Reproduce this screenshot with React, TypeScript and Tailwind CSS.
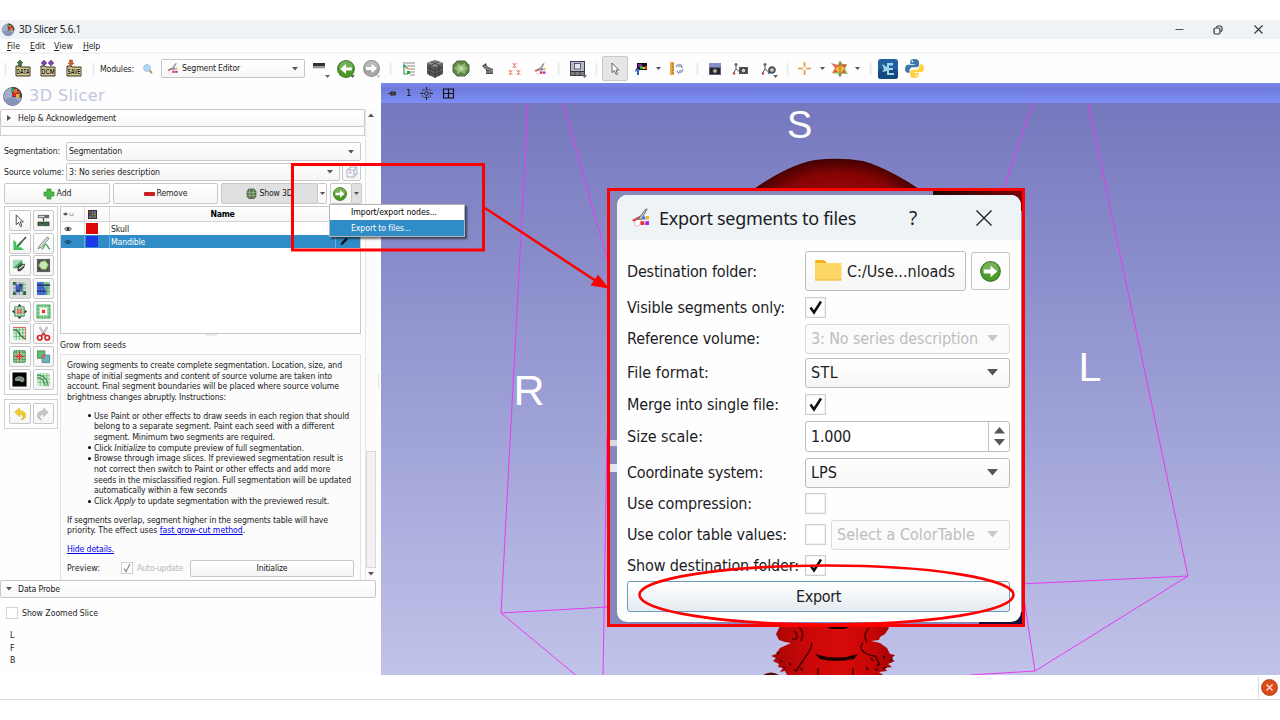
import React, { useLayoutEffect, useRef, useState } from 'react';

type Kids = { children?: React.ReactNode };

/* Text run whose tracking is adjusted so that it spans a given width. */
function T({ w, c = '', children }: Kids & { w: number; c?: string }) {
  const ref = useRef<HTMLSpanElement>(null);
  const [ls, setLs] = useState(0);
  useLayoutEffect(() => {
    const el = ref.current;
    if (!el) return;
    const n = (el.textContent || '').length;
    setLs((w - el.getBoundingClientRect().width) / n);
  }, [w]);
  return (
    <span ref={ref} className={'inline-block whitespace-pre ' + c} style={{ letterSpacing: ls + 'px' }}>
      {children}
    </span>
  );
}

function Svg({ w, h = w, vb, c = '', children }: Kids & { w: number; h?: number; vb?: string; c?: string }) {
  return (
    <svg width={w} height={h} viewBox={vb || `0 0 ${w} ${h}`} className={'block shrink-0 overflow-visible ' + c} fill="none">
      {children}
    </svg>
  );
}

const Caret = ({ w = 6, color = '#555' }: { w?: number; color?: string }) => (
  <Svg w={w} h={w * 0.6} vb="0 0 10 6">
    <path d="M0 0h10L5 6z" fill={color} />
  </Svg>
);

const Logo = ({ s }: { s: number }) => (
  <Svg w={s} vb="0 0 20 20">
    <circle cx="9.5" cy="10.5" r="9" fill="#a3b0cf" stroke="#6c7796" />
    <path d="M1.500 13a8.500 8.500 0 0 0 15.500 2L10 11z" fill="#8795b8" />
    <path d="M9 1a9 9 0 0 1 9.800 10.500L9 11z" fill="#3a4053" />
    <path d="M8 3l3-1v4H8z" fill="#3aa257" />
    <path d="M11 3h3.500v4H11z" fill="#e8682a" />
    <path d="M9 7h4v3.500H9z" fill="#d32b25" />
    <path d="M13 8h3.500v3.500H13z" fill="#f0b02e" />
    <path d="M14.500 5h2.500v3h-2.500z" fill="#c33" />
  </Svg>
);

const FileBox = ({ label, kind }: { label: string; kind: 'data' | 'dcm' | 'save' }) => (
  <Svg w={16} h={17}>
    <path d="M1 6h4l1 1h9v9H1z" fill="#c9b981" stroke="#3e3825" strokeWidth="1" />
    {kind === 'data' && <path d="M5 0l3 3H6.500v3h-3V3H2z" fill="#2d7a3f" stroke="#222" strokeWidth=".4" />}
    {kind === 'dcm' && <path d="M4 0l3 3-3 3-3-3zM11 0l3 3-3 3-3-3z" fill="#8b3fb0" stroke="#333" strokeWidth=".4" />}
    {kind === 'save' && <path d="M5 6L2 3h1.500V0h3v3H8z" fill="#e35a1d" stroke="#633" strokeWidth=".4" />}
    <text x="8" y="14.300" textAnchor="middle" fontSize="6.500" fontWeight="700" textLength="13.500" lengthAdjust="spacingAndGlyphs" fill="#111" stroke="#fff5cf" strokeWidth=".6" paintOrder="stroke" fontFamily="Liberation Sans, sans-serif">
      {label}
    </text>
  </Svg>
);

const Mag = () => (
  <Svg w={10}>
    <path d="M5.500 5.500l3.500 3.500" stroke="#c08a4a" strokeWidth="1.800" />
    <circle cx="4" cy="4" r="3.400" fill="#b5d6f4" stroke="#9dc0e6" strokeWidth=".9" />
  </Svg>
);

const SegIcon = ({ s }: { s: number }) => (
  <Svg w={s} vb="0 0 20 20">
    <path d="M3 13l7-3 1 3-2 5-4 1.500z" fill="#fff" stroke="#efb4bb" strokeWidth="1" />
    <path d="M1 12.500L10 8l1 2-8 4.500z" fill="#cf4a4a" />
    <path d="M7.500 12L15 1.500l2-.5L11 12z" fill="#c4c8cc" stroke="#5b6066" strokeWidth=".9" />
    <path d="M12 9h3v3h-3z" fill="#3a6de0" />
    <path d="M15.500 8.500h3.500v3.500h-3.500z" fill="#f1b52d" />
    <path d="M10 14h4v4h-4z" fill="#e0362f" />
    <path d="M15 14h4v4h-4z" fill="#a32ad6" />
  </Svg>
);

const RoundArrow = ({ s, dir, grey }: { s: number; dir: 'l' | 'r'; grey?: boolean }) => (
  <Svg w={s} vb="0 0 20 20">
    <circle cx="10" cy="10" r="9.300" fill={grey ? '#a6a6a6' : '#4c9a2a'} stroke={grey ? '#8e8e8e' : '#3c7d26'} strokeWidth="1.200" />
    <path d="M2 9a8 8 0 0 1 16 0c-5 2-11 2-16 0z" fill="#fff" opacity=".22" />
    <path
      transform={dir === 'l' ? 'matrix(-1 0 0 1 20 0)' : undefined}
      d="M3.500 8.200h6.500V4.500l6.500 5.500-6.500 5.500v-3.700H3.500z"
      fill="#fff"
    />
  </Svg>
);

const Cell = ({ w, corner, cc = '#666', children }: Kids & { w: string; corner?: boolean; cc?: string }) => (
  <div className={'relative flex h-full shrink-0 items-center justify-center ' + w}>
    {children}
    {corner && (
      <div className="absolute right-[3px] bottom-[5px]">
        <Caret w={5} color={cc} />
      </div>
    )}
  </div>
);

const Sep = ({ w }: { w: string }) => (
  <Cell w={w}>
    <div className="h-[12px] w-[3px] bg-[#f1f1f1]" />
  </Cell>
);

const Axes = () => (
  <>
    <path d="M4 2v5l-3 5M4 7l5 4" stroke="#555" strokeWidth="1" />
    <circle cx="2" cy="11.500" r="1.200" fill="#c44" />
    <circle cx="4" cy="2.500" r="1.500" fill="#666" />
    <circle cx="8" cy="11" r="1.200" fill="#48b" />
  </>
);

function Toolbar() {
  return (
    <div className="flex h-[29px] items-center bg-[#fefefe]">
      <Sep w="w-[10px]" />
      <Cell w="w-[25px]"><FileBox label="DATA" kind="data" /></Cell>
      <Cell w="w-[26px]"><FileBox label="DCM" kind="dcm" /></Cell>
      <Cell w="w-[26px]"><FileBox label="SAVE" kind="save" /></Cell>
      <Sep w="w-[13px]" />
      <div className="w-[43px] pt-px"><T w={34}>Modules:</T></div>
      <Mag />
      <div className="ml-[8px] flex h-[19px] w-[144px] items-center rounded-[2px] border border-[#c6c6c6] bg-gradient-to-b from-white to-[#f7f7f7] pr-[6px] pl-[5px]">
        <SegIcon s={11} />
        <div className="ml-[4px] flex-1"><T w={58}>Segment Editor</T></div>
        <Caret />
      </div>
      <Cell w="w-[28px]" corner>
        <Svg w={12} h={8} c="mb-[5px]">
          <path d="M0 1h12v3H0z" fill="#333" />
          <path d="M0 4h12v2H0z" fill="#999" />
          <path d="M0 6h12v1H0z" fill="#ddd" />
        </Svg>
      </Cell>
      <Cell w="w-[25px]" corner><RoundArrow s={18} dir="l" /></Cell>
      <Cell w="w-[26px]" corner cc="#ccc"><RoundArrow s={17} dir="r" grey /></Cell>
      <Sep w="w-[12px]" />
      <Cell w="w-[26px]">
        <Svg w={14}>
          <path d="M1 1h12M5 4h8M5 7h8M8 10h5M8 13h5" stroke="#888" strokeWidth="1" />
          <path d="M2 2v10h4M2 5h3" stroke="#3a9a4a" strokeWidth="1.200" />
          <path d="M1 3h3v2H1z" fill="#3aa" />
          <path d="M5 9h3v3H5z" fill="#27a83c" />
          <path d="M4 5h2v2H4z" fill="#e5a02a" />
        </Svg>
      </Cell>
      <Cell w="w-[25px]">
        <Svg w={18}>
          <path d="M9 0l8 3v11l-8 4-8-4V3z" fill="#5c5c5c" />
          <path d="M9 0l8 3-8 4-8-4z" fill="#8b8b8b" />
          <path d="M9 7v11M4 5v11M13 5v11M1 7l8 4 8-4M1 11l8 4 8-4M5 1.500l8 3.700M13 1.500L5 5.200" stroke="#2c2c2c" strokeWidth=".7" />
        </Svg>
      </Cell>
      <Cell w="w-[27px]">
        <Svg w={18} h={17}>
          <path d="M5 1h8l4 4v7l-4 4H5l-4-4V5z" fill="#5f8746" stroke="#4a6b3a" />
          <path d="M5 3l4 2 4-2v3l3 2-3 3v3l-4-2-4 2v-3L2 8l3-2z" fill="#9cc080" opacity=".85" />
          <circle cx="9" cy="8.500" r="2.500" fill="#b9d6a0" />
        </Svg>
      </Cell>
      <Cell w="w-[27px]">
        <Svg w={13} h={13}>
          <path d="M1 4l4-3 1 3 6 3v5H5V8z" fill="#4a4a4a" />
          <path d="M3 6l9 3M3 4l9 3M5 10h7" stroke="#bbb" strokeWidth=".8" />
        </Svg>
      </Cell>
      <Cell w="w-[26px]">
        <Svg w={13} h={12}>
          <path d="M4.500 0l4 5M8.500 0l-4 5M6.500 0v5M.500 7l4 5M4.500 7l-4 5M2.500 7v5M8.500 7l4 5M12.500 7l-4 5M10.500 7v5" stroke="#ef8f7c" strokeWidth="1" />
        </Svg>
      </Cell>
      <Cell w="w-[25px]"><SegIcon s={12} /></Cell>
      <Sep w="w-[13px]" />
      <Cell w="w-[25px]" corner>
        <Svg w={15}>
          <rect x=".5" y=".5" width="14" height="14" fill="#b7b9d3" stroke="#3c3c48" />
          <path d="M.5 10.500h14M5 10v5M10 10v5" stroke="#333" />
          <rect x="4.500" y="2.500" width="6" height="5.500" fill="#e4e5f2" stroke="#444" strokeWidth=".8" />
          <path d="M1 11h13v3H1z" fill="#555" opacity=".6" />
        </Svg>
      </Cell>
      <Sep w="w-[12px]" />
      <div className="flex h-[25px] w-[26px] items-center justify-center rounded-[2px] border border-[#c9c9c9] bg-[#e6e6e6]">
        <Svg w={8} h={12}><path d="M1 0v9.500l2.300-2L5 11.500l1.500-.6L5 7h2.800z" fill="#fff" stroke="#444" strokeWidth=".8" /></Svg>
      </div>
      <Cell w="w-[26px]">
        <Svg w={13} h={12}>
          <path d="M2 0h10v7H2z" fill="#111" />
          <path d="M3 1h4v3H3z" fill="#8a1fa0" />
          <path d="M5 3h3v3H5z" fill="#2bb34a" />
          <path d="M8 4h2v2H8z" fill="#e0d22b" />
          <path d="M10 3h2v3h-2z" fill="#e03030" />
          <path d="M1 5l3 1v6H2V8L0 9z" fill="#2f63c4" />
        </Svg>
      </Cell>
      <Cell w="w-[9px]"><Caret w={5} /></Cell>
      <Cell w="w-[27px]">
        <Svg w={14} h={13}>
          <path d="M0 0h4v13H0z" fill="#e6a840" />
          <path d="M2 2h2M2 5h2M2 8h2M2 11h2" stroke="#875b12" strokeWidth=".8" />
          <path d="M6 5c2-4 6-3 6 1M13 7c-1 4-5 5-6 2" stroke="#7d8cc0" strokeWidth="1.200" />
          <path d="M8 2h3v3H8zM9 8h3v3H9z" fill="#aab3d4" />
        </Svg>
      </Cell>
      <Sep w="w-[14px]" />
      <Cell w="w-[22px]">
        <Svg w={12} h={12}>
          <path d="M0 0h12v12H0z" fill="#5b6286" />
          <path d="M0 0h12v4H0z" fill="#8590c9" />
          <rect x="1" y="5" width="10" height="6" rx="1" fill="#222" />
          <circle cx="6" cy="8" r="2.200" fill="#bbb" stroke="#444" />
        </Svg>
      </Cell>
      <Cell w="w-[29px]">
        <Svg w={17} h={13}>
          <Axes />
          <path d="M7 5h9v7H7z" fill="#555" />
          <circle cx="11.500" cy="8.500" r="2.500" fill="#ccc" stroke="#222" />
        </Svg>
      </Cell>
      <Cell w="w-[26px]" corner>
        <Svg w={15} h={13}>
          <Axes />
          <circle cx="11" cy="8" r="3.300" fill="#777" stroke="#333" />
          <circle cx="11" cy="8" r="1.500" fill="#ddd" />
        </Svg>
      </Cell>
      <Sep w="w-[12px]" />
      <Cell w="w-[23px]">
        <Svg w={13}>
          <path d="M6.500 0v5M6.500 8v5M0 6.500h5M8 6.500h5" stroke="#e79b45" strokeWidth="1.700" />
          <circle cx="6.500" cy="6.500" r="2" stroke="#f2c48c" strokeWidth=".9" />
        </Svg>
      </Cell>
      <Cell w="w-[12px]"><Caret w={5} /></Cell>
      <Cell w="w-[24px]">
        <Svg w={18}>
          <path d="M9 1l3 3 4 1-2 4 3 5-5-1-3 4-3-4-4 1 2-5z" fill="#7ec45a" />
          <path d="M0 3l7 2 9-1-3 5 2 5-8-2-6 1 3-5z" fill="#e0523c" opacity=".85" />
          <path d="M9 5l5 3-5 6-5-5z" fill="#f0c93c" opacity=".9" />
          <path d="M9 1v16" stroke="#a33" strokeWidth=".7" />
        </Svg>
      </Cell>
      <Cell w="w-[11px]"><Caret w={5} /></Cell>
      <Sep w="w-[14px]" />
      <Cell w="w-[22px]">
        <Svg w={20}>
          <rect width="20" height="20" rx="3" fill="#2060a0" />
          <rect y="10" width="20" height="10" rx="3" fill="#174a82" />
          <path d="M4 5l5 3V4h6v2.500h-4V9h4v2h-4v3h5v2H9v-4l-5 1 2-3z" fill="#9fd8e4" />
        </Svg>
      </Cell>
      <Cell w="w-[30px]">
        <Svg w={19} vb="0 0 20 20">
          <path d="M9.800 0C6.500 0 5.500 1.400 5.500 3v2.200h4.700V6H3.500C1.500 6 0 7.500 0 10.200S1.300 14.500 3 14.500h1.800V12c0-1.800 1.500-3.200 3.200-3.200h4.200c1.400 0 2.500-1.200 2.500-2.600V3c0-1.600-1.500-3-4.900-3z" fill="#3c78a9" />
          <path d="M10.200 20c3.300 0 4.300-1.400 4.300-3v-2.200H9.800V14h6.700c2 0 3.500-1.500 3.500-4.200S18.700 5.500 17 5.500h-1.800V8c0 1.800-1.500 3.200-3.200 3.200H7.800c-1.400 0-2.500 1.200-2.500 2.600V17c0 1.600 1.500 3 4.900 3z" fill="#fdd13f" />
          <circle cx="7.800" cy="2.600" r=".9" fill="#fff" />
          <circle cx="12.200" cy="17.400" r=".9" fill="#fff" />
        </Svg>
      </Cell>
    </div>
  );
}

const btn = 'flex items-center justify-center rounded-[2px] border border-[#c8c8c8] bg-gradient-to-b from-white to-[#f5f5f5] ';

const grid = (c: string, o = 0.9) => <path d="M1 4h14M1 7.500h14M1 11h14M4.500 1v14M8 1v14M11.500 1v14" stroke={c} strokeWidth=".7" opacity={o} />;

const effects: React.ReactNode[] = [
  <path d="M4.500 2v10.500l2.600-2.400 1.900 4.400 1.600-.7-1.900-4.300h3.300z" fill="#fff" stroke="#444" strokeWidth="1" />,
  <>
    <path d="M2 2h12v3.500H2z" fill="#666" /><path d="M3 3h6v1.500H3z" fill="#ddd" />
    <path d="M8 5.500v3M4 10.500h8" stroke="#333" strokeWidth="1.300" />
    <path d="M2 9.500h4v4H2zM7 9.500h7v4H7z" fill="#3c6b45" stroke="#222" strokeWidth=".6" />
  </>,
  <>
    <path d="M1.500 4v11H13l-3.500-3H6.500L4.500 10V7z" fill="#42c25b" />
    <path d="M15 1L9 7.500" stroke="#444" strokeWidth="1.600" /><path d="M10 6.500L5.500 11.500" stroke="#2a8a3d" strokeWidth="2.400" />
  </>,
  <>
    <path d="M12 1L4 10l-2 3.500L6 12l8-9.500z" fill="#ddd" stroke="#666" strokeWidth=".8" />
    <path d="M6 14c3 0 2-5 4.500-5s2 5 4.500 5" stroke="#35a852" strokeWidth="1.300" />
  </>,
  <>
    <path d="M1 2h10v9H1z" fill="#39a560" /><path d="M1 2h10L1 11z" fill="#a5dcb6" />
    <path d="M6 9l4-3h4l-1 4-4 4H6z" fill="#444" /><path d="M7.500 11.500l5-4" stroke="#eee" strokeWidth="1.200" />
  </>,
  <>
    <path d="M1 1h14v14H1z" fill="#444" /><path d="M2 2h12v12H2z" stroke="#999" strokeWidth=".6" />
    <path d="M5 4l5-1 3 4-2 5H6l-3-4z" fill="#c7ecae" stroke="#78b356" />
  </>,
  <>
    <path d="M1 1h14v14H1z" fill="#b9c8ea" /><path d="M9 1h6v14H9z" fill="#bde5bd" /><path d="M4 4h7v7H4z" fill="#4a6cc8" />
    <path d="M1 1h3v3H1zM12 11h3v4h-3zM1 12h3v3H1z" fill="#216b35" /><path d="M8 3h3v3H8zM5 9h3v3H5z" fill="#173896" />{grid('#444', 0.6)}
  </>,
  <>
    <path d="M1 1h14v14H1z" fill="#8fd58c" /><path d="M1 1h7v4l3 5v5H1z" fill="#4a72e0" /><path d="M1 4.500h14M1 11h9" stroke="#1d3f86" strokeWidth="1.500" />{grid('#335', 0.5)}
  </>,
  <>
    <path d="M3 3h10v10H3z" fill="#86cf92" stroke="#2c7a3c" /><path d="M5.500 5.500h5v5h-5z" fill="#e8534a" />{grid('#fff', 0.5)}
    <path d="M8 0l2 2.500H6zM8 16l2-2.500H6zM0 8l2.500-2v4zM16 8l-2.500-2v4z" fill="#222" />
  </>,
  <>
    <path d="M1 1h14v14H1z" fill="#6ac67b" stroke="#3c9a4e" strokeWidth=".8" />{grid('#fff', 0.6)}<path d="M4 4h8v8H4z" fill="#fff" /><path d="M6.500 6.500l3 3M9.500 6.500l-3 3" stroke="#e22" strokeWidth="1.700" />
  </>,
  <>
    <path d="M1 1h14v14H1z" fill="#d8f0da" />{grid('#3fa052')}<path d="M1 4l5 1 3 5 5 4" stroke="#256e34" strokeWidth="1.200" /><path d="M1 1.500h13.500V15" stroke="#e55" strokeWidth="1" />
  </>,
  <>
    <path d="M4 1l5 9M12 1L7 10" stroke="#999" strokeWidth="2" /><path d="M4 1l5 9M12 1L7 10" stroke="#eee" strokeWidth=".8" />
    <circle cx="4" cy="12.500" r="2.400" stroke="#d5232a" strokeWidth="1.800" /><circle cx="12" cy="12.500" r="2.400" stroke="#d5232a" strokeWidth="1.800" /><path d="M5.500 10.500L8 8l2.500 2.500" stroke="#d5232a" strokeWidth="1.600" />
  </>,
  <>
    <path d="M2 2h12v12H2z" fill="#a5e0ae" stroke="#2e8a42" />{grid('#23702f', 0.7)}<path d="M8 3v10M3 8h10" stroke="#ee3030" strokeWidth="1.100" /><circle cx="8" cy="8" r="2.300" stroke="#ee3030" />
  </>,
  <>
    <path d="M1.500 2h8v8h-8z" fill="#69ba72" stroke="#3c7d46" strokeWidth=".8" /><path d="M6.500 6.500h8v8h-8z" fill="#69b2c4" stroke="#417d8d" strokeWidth=".8" /><path d="M6.500 6.500h3v3.500h-3z" fill="#c0646a" />
  </>,
  <>
    <path d="M.5.500h15v15H.5z" fill="#050505" /><path d="M3 8c0-4 8-5 10-1 1 3-1 4-3 4-1-2-3-1-5-1.500C3.500 9.500 3 9 3 8z" fill="#8c9a8e" /><path d="M5 7l3-1 3 2" stroke="#5a675c" />
  </>,
  <>
    <path d="M1 1h14v14H1z" fill="#d5f0d7" />{grid('#4cae5e')}<path d="M1 3c7 0 11 4 12 12M1 6c5 0 8 3 9 9" stroke="#47915a" strokeWidth="1.200" />
  </>,
];

const curl = 'M2 6l5.500-5v3.200c5 0 7 2.800 7 5.800 0 2.500-2.500 4.500-5.500 4.500 2-1 2.700-2.300 2.400-3.800C11 9 9.500 8.300 7.500 8.300V11z';

function EffectTools() {
  return (
    <div className="w-[54px] shrink-0">
      <div className="grid h-[189px] grid-cols-2 content-start gap-x-[2px] gap-y-[1.700px] border border-[#d0d0d0] pt-[3px] pl-[4px] pr-[3px]">
        {effects.map((e, i) => (
          <div key={i} className={btn + 'h-[21px] ' + (i === 6 ? '!bg-none !bg-[#dcdcdc]' : '')}>
            <Svg w={15} vb="0 0 16 16">{e}</Svg>
          </div>
        ))}
      </div>
      <div className="mt-[4px] grid h-[30px] grid-cols-2 content-start gap-x-[2px] border border-[#d0d0d0] pt-[3px] pl-[4px] pr-[3px]">
        <div className={btn + 'h-[21px]'}><Svg w={14} vb="0 0 16 16"><path d={curl} fill="#f0ce2c" stroke="#c9a417" strokeWidth=".6" /></Svg></div>
        <div className={btn + 'h-[21px]'}><Svg w={14} vb="0 0 16 16"><g transform="matrix(-1 0 0 1 16 0)"><path d={curl} fill="#c6c6c6" stroke="#aaa" strokeWidth=".6" /></g></Svg></div>
      </div>
    </div>
  );
}

const Eye = ({ c = '#333' }: { c?: string }) => (
  <Svg w={8} h={6}><path d="M.5 3C2 .8 6 .8 7.500 3 6 5 2 5 .5 3z" stroke={c} strokeWidth=".9" /><circle cx="4" cy="3" r="1.500" fill={c} /></Svg>
);

function Table() {
  return (
    <div className="h-[128px] w-[301px] border border-[#c9c9c9] bg-white">
      <div className="flex h-[15px] border-b border-[#d4d4d4] bg-gradient-to-b from-white to-[#f6f6f6]">
        <div className="flex w-[24px] items-center border-r border-[#ddd] pl-[2px]">
          <Svg w={12} h={6}><path d="M0 3h5" stroke="#777" /><circle cx="2.500" cy="3" r="1.500" fill="#555" /><path d="M7 2v2.500h3V2" stroke="#aaa" /></Svg>
        </div>
        <div className="flex w-[24px] items-center pl-[3px]">
          <Svg w={9}><path d="M0 0h9v9H0z" fill="#333" /><path d="M1 1h2v2H1z" fill="#b33" /><path d="M3.500 1h2v2h-2z" fill="#494" /><path d="M6 1h2v2H6z" fill="#66c" /><path d="M1 3.500h2v2H1z" fill="#936" /><path d="M3.500 3.500h2v2h-2z" fill="#5a9" /><path d="M6 3.500h2v2H6z" fill="#a84" /><path d="M1 6h2v2H1zM3.500 6h2v2h-2zM6 6h2v2H6z" fill="#777" /></Svg>
        </div>
        <div className="flex flex-1 items-center justify-center border-l border-[#ddd] pt-px pr-[25px] font-bold text-black"><T w={24}>Name</T></div>
      </div>
      <div className="flex h-[13px] items-center">
        <div className="flex h-full w-[24px] items-center border-r border-[#ddd] pl-[3px]"><Eye /></div>
        <div className="ml-[1px] h-[11px] w-[12px] bg-[#dc0808]" />
        <div className="ml-[11px] flex h-full flex-1 items-center border-l border-[#ddd] pt-px pl-[1px]"><T w={18}>Skull</T></div>
      </div>
      <div className="flex h-[13px] items-center bg-[#308cc6] text-white">
        <div className="flex h-full w-[24px] items-center border-r border-[#6badd6] pl-[3px]"><Eye c="#1c4a6b" /></div>
        <div className="ml-[1px] h-[11px] w-[12px] bg-[#1c39e8]" />
        <div className="ml-[11px] flex h-full flex-1 items-center border-l border-[#6badd6] pt-px pl-[1px]"><T w={34}>Mandible</T></div>
        <div className="flex h-full w-[25px] items-center border-l border-[#6badd6] pl-[4px]">
          <Svg w={8} h={9}><path d="M1 8l.7-2.500L6 1l1.500 1.400L3 7z" fill="#111" stroke="#111" strokeWidth=".6" /></Svg>
        </div>
      </div>
    </div>
  );
}

const Line = ({ w, b, children }: Kids & { w: number; b?: boolean }) => (
  <div className="flex h-[10.670px] items-center">
    {b && <span className="mr-[3px] ml-[-6px] h-[3px] w-[3px] shrink-0 rounded-full bg-black" />}
    <T w={w}>{children}</T>
  </div>
);

function EffectOptions() {
  return (
    <div className="h-[240px] w-[301px] border border-b-0 border-[#e2e2e2] bg-[#fcfcfc] pt-[5px] pl-[6px]">
      <Line w={275}>Growing segments to create complete segmentation. Location, size, and</Line>
      <Line w={265}>shape of initial segments and content of source volume are taken into</Line>
      <Line w={272}>account. Final segment boundaries will be placed where source volume</Line>
      <Line w={159}>brightness changes abruptly. Instructions:</Line>
      <div className="mt-[8px] pl-[27px]">
        <Line w={255} b>Use Paint or other effects to draw seeds in each region that should</Line>
        <Line w={240}>belong to a separate segment. Paint each seed with a different</Line>
        <Line w={181}>segment. Minimum two segments are required.</Line>
        <Line w={210} b>Click <i>Initialize</i> to compute preview of full segmentation.</Line>
        <Line w={249} b>Browse through image slices. If previewed segmentation result is</Line>
        <Line w={236}>not correct then switch to Paint or other effects and add more</Line>
        <Line w={257}>seeds in the misclassified region. Full segmentation will be updated</Line>
        <Line w={133}>automatically within a few seconds</Line>
        <Line w={235} b>Click <i>Apply</i> to update segmentation with the previewed result.</Line>
      </div>
      <div className="mt-[8px]">
        <Line w={261}>If segments overlap, segment higher in the segments table will have</Line>
        <Line w={178}>priority. The effect uses <span className="text-[#0000ee] underline">fast grow-cut method</span>.</Line>
      </div>
      <div className="mt-[8px] text-[#0000ee] underline"><Line w={47}>Hide details.</Line></div>
      <div className="mt-[5px] flex h-[17px] items-center">
        <div className="w-[54px]"><T w={33}>Preview:</T></div>
        <div className="flex h-[12px] w-[12px] items-center justify-center border border-[#d0d0d0] bg-white">
          <Svg w={8}><path d="M1 4.500l2 3L7 0" stroke="#888" strokeWidth="1.200" /></Svg>
        </div>
        <div className="ml-[4px] w-[53px] text-[#b8b8b8]"><T w={46}>Auto-update</T></div>
        <div className={btn + 'h-[17px] w-[164px]'}><T w={31}>Initialize</T></div>
      </div>
      <div className="mt-[3px] ml-[234px] h-[6px] w-[51px] rounded-[2px] border border-[#ccc]" />
    </div>
  );
}

function LeftPanel() {
  return (
    <div className="h-full w-[381px] shrink-0 overflow-hidden bg-[#fefefe]">
      <div className="flex h-[26px] items-center pl-[3px] font-['DejaVu_Sans',sans-serif] text-[16px] text-[#c0c6de]">
        <Logo s={20} />
        <div className="ml-[6px]"><T w={76}>3D Slicer</T></div>
      </div>
      <div className="flex h-[471px]">
        <div className="h-full w-[365px] shrink-0 overflow-hidden">
          <div className="flex h-[18px] items-center rounded-[2px] border border-[#c6c6c6] bg-gradient-to-b from-white to-[#f8f8f8] pl-[6px]">
            <Svg w={4} h={6}><path d="M0 0l4 3-4 3z" fill="#555" /></Svg>
            <div className="ml-[7px]"><T w={98}>Help &amp; Acknowledgement</T></div>
          </div>
          <div className="h-[9px] border border-t-0 border-[#d0d0d0]" />
          <div className="mt-[6px] flex h-[19px] items-center pl-[4px]">
            <div className="w-[62px]"><T w={56}>Segmentation:</T></div>
            <div className={btn + 'h-full w-[295px] !justify-between pr-[6px] pl-[2px]'}><T w={53}>Segmentation</T><Caret /></div>
          </div>
          <div className="mt-[2px] flex h-[18px] items-center pl-[4px]">
            <div className="w-[62px]"><T w={60}>Source volume:</T></div>
            <div className={btn + 'h-full w-[274px] !justify-between pr-[6px] pl-[2px]'}><T w={91}>3: No series description</T><Caret /></div>
            <div className={btn + 'ml-[2px] h-full w-[19px]'}>
              <Svg w={12}><path d="M1 4h7v7H1zM4 1h7v7H8M4 1v3M1 4l3-3M8 4l3-3M8 11l3-3" stroke="#8ba6c4" strokeWidth=".8" /><path d="M4 5v3M3 6.500h3M9 2v3" stroke="#e6a0a0" strokeWidth=".8" /></Svg>
            </div>
          </div>
          <div className="mt-[2px] flex h-[21px] pl-[4px]">
            <div className={btn + 'w-[106px] gap-[2px]'}>
              <Svg w={12}><path d="M4 1h4v3h3v4H8v3H4V8H1V4h3z" fill="#49b749" stroke="#2f8f2f" strokeWidth=".7" /></Svg>
              <T w={15}>Add</T>
            </div>
            <div className={btn + 'ml-[3px] w-[105px] gap-[2px]'}><span className="h-[4px] w-[11px] rounded-[1px] bg-[#cf1f26]" /><T w={31}>Remove</T></div>
            <div className={btn + 'ml-[3px] w-[97px] gap-[4px] !bg-none !bg-[#e0e0e0]'}>
              <Svg w={9} h={11} vb="0 0 10 12"><path d="M2 1h6l2 3v5l-2 2.500H2L0 9V4z" fill="#5a7a4a" stroke="#333" strokeWidth=".7" /><path d="M3 1v10M7 1v10M0 5h10M0 8h10" stroke="#a8c494" strokeWidth=".7" /></Svg>
              <T w={33}>Show 3D</T>
            </div>
            <div className={btn + 'ml-[-1px] w-[10px]'}><Caret w={5} /></div>
            <div className={btn + 'ml-[3px] w-[22px] pr-[3px]'}><RoundArrow s={14} dir="r" /></div>
            <div className={btn + 'ml-[-1px] w-[11px] !bg-none !bg-[#e0e0e0]'}><Caret w={5} /></div>
          </div>
          <div className="mt-[2px] flex gap-[2px] pl-[4px]">
            <EffectTools />
            <div className="w-[301px]">
              <Table />
              <div className="mx-auto h-[2px] w-[12px] bg-[#ececec]" />
              <div className="flex h-[18px] items-center pt-px"><T w={66}>Grow from seeds</T></div>
              <EffectOptions />
            </div>
          </div>
        </div>
        <div className="flex h-full w-[11px] flex-col items-center border-l border-[#e6e6e6] bg-[#fbfbfb]">
          <div className="flex h-[12px] rotate-180 items-center"><Caret w={6} /></div>
          <div className="flex-1" />
          <div className="h-[117px] w-[10px] border border-[#d8d8d8] bg-[#f2f2f2]" />
          <div className="flex h-[12px] items-center"><Caret w={6} /></div>
        </div>
        <div className="mt-[266px] ml-[2px] h-[14px] w-[2px] border-l border-dotted border-[#ccc]" />
      </div>
      <div className="flex h-[18px] w-[376px] items-center rounded-[2px] border border-[#c8c8c8] bg-gradient-to-b from-white to-[#f8f8f8] pl-[5px]">
        <Caret w={6} /><div className="ml-[6px]"><T w={42}>Data Probe</T></div>
      </div>
      <div className="mt-[9px] flex h-[12px] items-center pl-[6px]">
        <div className="h-[12px] w-[12px] border border-[#d3d3d3] bg-white" />
        <div className="ml-[4px] pt-px"><T w={76}>Show Zoomed Slice</T></div>
      </div>
      <div className="mt-[10px] pl-[10px] leading-[12.500px]">
        <div>L</div><div>F</div><div>B</div>
      </div>
    </div>
  );
}

function View3D() {
  return (
    <div className="flex min-w-0 flex-1 flex-col">
      <div className="flex h-[20px] items-center bg-gradient-to-b from-[#7c88e6] via-[#6f7cdc] via-30% to-[#7e8ef8] pl-[7px] text-[#111]">
        <Svg w={9} h={7}><path d="M0 3.500h3M3 1v5M3.500 2h4V5h-4z" stroke="#333" strokeWidth="1" fill="#444" /></Svg>
        <div className="ml-[9px] w-[14px] pt-px font-['DejaVu_Sans',sans-serif]">1</div>
        <Svg w={13} vb="0 0 12 12"><path d="M6 0v3M6 9v3M0 6h3M9 6h3" stroke="#222" /><rect x="2.500" y="2.500" width="7" height="7" stroke="#333" strokeWidth=".8" strokeDasharray="2 1" /><circle cx="6" cy="6" r="1.700" stroke="#222" strokeWidth=".9" /></Svg>
        <div className="ml-[10px]"><Svg w={11}><path d="M.5 1h10v9H.5zM5.500 1v9M.5 5.500h10" stroke="#111" strokeWidth="1.100" /></Svg></div>
      </div>
      <div className="relative flex-1 overflow-hidden bg-gradient-to-b from-[#7678be] to-[#c1c3e9]">
        <svg className="block" width="899" height="572" viewBox="381 103 899 572" fill="none">
          <defs>
            <radialGradient id="cap" cx="838" cy="205" r="90" gradientUnits="userSpaceOnUse" gradientTransform="translate(0 100) scale(1 .5)">
              <stop offset="0" stopColor="#a00606" /><stop offset=".65" stopColor="#850404" /><stop offset="1" stopColor="#3a0000" />
            </radialGradient>
            <linearGradient id="bone" x1="772" x2="898" y1="0" y2="0" gradientUnits="userSpaceOnUse">
              <stop offset="0" stopColor="#a80505" /><stop offset=".3" stopColor="#cb0808" /><stop offset=".55" stopColor="#d80a0a" /><stop offset=".8" stopColor="#c50606" /><stop offset="1" stopColor="#9c0303" />
            </linearGradient>
          </defs>
          <path d="M528 103L501 613L607 607M501 613L602 697M607 434L603 675M563 103L640 375M1033 103L1003 190M1088 103L1188 576L1035 671L970 675M1020 584L1188 576M1022 585L1035 671" stroke="#e83af0" strokeWidth="1" />
          <path d="M752 190C770 178 792 164 815 160Q840 157 863 161C885 167 905 180 921 190z" fill="url(#cap)" />
          <path d="M781 624l-5 10 3 6 6 2 6 1-11 5-4 6-5 2 5 2-3 3 6 3-1 3 5 1-3 4 5-1 2 4h96l-4-3 8-1-2-3 7-1-4-3 7-3-4-2 4-4-5-1-3-6-7-5-9-2 8-1 1-3 5-3 4-6-5-6z" fill="url(#bone)" />
          <path d="M794 631c5 4 4 10-2 8M799 627q6 6 2 14M869 628q-7 7-2 14" stroke="#6a0000" strokeWidth="2" />
          <path d="M812 643c-1 9-6 12-8 16l-8 12M863 643c-6 5 1 12 12 13l5 9M818 668v7M853 668v7" stroke="#4a0000" strokeWidth="1.500" />
          <path d="M815 654q22 7 43 0l-4 5q-18 4-34 0zM827 627h22l-4 2h-14z" fill="#220000" />
          <path d="M777 652l2 2M780 660l2 2M783 667l2 1M789 663l2 2M794 670l3 1M885 656l-2 2M892 658l-1 3M879 664l-2 2M886 667l-3 2M871 658l2 3M875 669l3 1M800 668l3 2M866 667l2 3" stroke="#330000" strokeWidth="1.500" />
          <path d="M763 675q8-5 16 0z" fill="#5c0505" />
          <g fill="#fff" fontFamily="Liberation Sans, sans-serif">
            <text x="787" y="138" fontSize="38">S</text>
            <text x="513.500" y="405" fontSize="43">R</text>
            <text x="1078.500" y="381" fontSize="41">L</text>
          </g>
        </svg>
      </div>
    </div>
  );
}

const Check = ({ on }: { on?: boolean }) => (
  <div className="flex h-[21px] w-[21px] shrink-0 items-center justify-center border border-[#cfcfcf] bg-white shadow-[inset_0_0_0_1px_#f2f2f2]">
    {on && <Svg w={13} h={15}><path d="M1.500 7.500L5 12.500 12 1.500" stroke="#111" strokeWidth="2.600" /></Svg>}
  </div>
);

const Combo = ({ w, off, c = '', children }: Kids & { w?: number; off?: boolean; c?: string }) => (
  <div className={'flex h-[30px] flex-1 items-center justify-between rounded-[3px] border pr-[11px] pl-[5px] ' + (off ? 'border-[#d9d9d9] bg-[#fbfbfb] text-[#bdbdbd] ' : 'border-[#bcbcbc] bg-gradient-to-b from-white to-[#f6f6f6] ') + c}>
    <div className="pt-px"><T w={w || 0}>{children}</T></div>
    <Caret w={11} color={off ? '#c9c9c9' : '#555'} />
  </div>
);

const Row = ({ h, label, w, children }: Kids & { h: string; label: string; w: number }) => (
  <div className={'flex items-center ' + h}>
    <div className="w-[178px] shrink-0 pt-px"><T w={w}>{label}</T></div>
    {children}
  </div>
);

function ExportDialog() {
  return (
    <div className="absolute top-[188px] left-[607px] flex h-[439px] w-[418px] overflow-hidden border-[3px] border-[#fe0000] bg-[#8587bd] pt-[4px] pl-[7px] text-[16px] leading-[18px] text-[#1c1c24]">
      <div className="absolute top-0 left-[323px] h-[20px] w-[90px] bg-gradient-to-r from-[#240404] to-[#7d0606]" />
      <div className="absolute top-[249px] left-0 h-[6px] w-[8px] bg-[#d9d9e4]" />
      <div className="absolute top-[273px] left-0 h-[8px] w-[8px] bg-[#e4e4ee]" />
      <div className="absolute right-0 bottom-0 h-[12px] w-[43px] bg-[#12123a]" />
      <div className="relative h-[427px] w-[404px] overflow-hidden rounded-[10px] bg-[#fefefe]">
        <div className="flex h-[45px] items-center bg-[#eef3f6] pl-[14px] font-['Noto_Sans',sans-serif] text-[18px]">
          <SegIcon s={19} />
          <div className="ml-[9px] w-[250px]"><T w={197}>Export segments to files</T></div>
          <div className="w-[67px] text-[19px]">?</div>
          <Svg w={16}><path d="M.5.500l15 15M15.500.500l-15 15" stroke="#222" strokeWidth="1.400" /></Svg>
        </div>
        <div className="pt-[10px] pr-[11px] pl-[10px]">
          <Row h="h-[42px]" w={130} label="Destination folder:">
            <div className="flex h-[40px] w-[162px] items-center rounded-[3px] border border-[#bcbcbc] bg-gradient-to-b from-white to-[#f6f6f6] pl-[8px]">
              <Svg w={28} h={22}>
                <path d="M1 2q0-2 2-2h7l3 3v5H1z" fill="#f5b01c" /><rect x="1" y="3" width="26.500" height="17.500" rx="1" fill="#fcd766" /><path d="M1 20h26.500" stroke="#f0b73a" />
              </Svg>
              <div className="ml-[5px] pt-px"><T w={108}>C:/Use...nloads</T></div>
            </div>
            <div className="ml-[5px] flex h-[38px] w-[39px] items-center justify-center rounded-[3px] border border-[#c4c4c4]"><RoundArrow s={21} dir="r" /></div>
          </Row>
          <Row h="h-[31px]" w={158} label="Visible segments only:"><Check on /></Row>
          <Row h="h-[31px]" w={133} label="Reference volume:"><Combo w={167} off>3: No series description</Combo></Row>
          <Row h="h-[37px]" w={82} label="File format:"><Combo w={27}>STL</Combo></Row>
          <Row h="h-[26px]" w={152} label="Merge into single file:"><Check on /></Row>
          <Row h="h-[39px]" w={76} label="Size scale:">
            <div className="flex h-[31px] flex-1 rounded-[3px] border border-[#bcbcbc] bg-white">
              <div className="flex flex-1 items-center pt-px pl-[5px]"><T w={40}>1.000</T></div>
              <div className="flex w-[21px] flex-col items-center justify-center gap-[5px] border-l border-[#c4c4c4]">
                <div className="rotate-180"><Caret w={11} /></div><Caret w={11} />
              </div>
            </div>
          </Row>
          <Row h="h-[33px]" w={136} label="Coordinate system:"><Combo w={26}>LPS</Combo></Row>
          <Row h="h-[29px]" w={125} label="Use compression:"><Check /></Row>
          <Row h="h-[33px]" w={160} label="Use color table values:"><Check /><Combo w={138} off c="ml-[5px]">Select a ColorTable</Combo></Row>
          <Row h="h-[29px]" w={172} label="Show destination folder:"><Check on /></Row>
          <div className="mt-px flex h-[31px] items-center justify-center rounded-[3px] border border-[#6d9dbd] bg-gradient-to-b from-white to-[#e5ebf0] pt-px"><T w={45}>Export</T></div>
        </div>
      </div>
    </div>
  );
}

export default function App() {
  return (
    <div className="relative h-[720px] w-[1280px] overflow-hidden bg-white pt-[20px] font-['DejaVu_Sans_Condensed','Noto_Sans',sans-serif] text-[8.670px] leading-[10.670px] text-[#1a1a22]">
      <div className="flex h-[19px] items-center bg-[#eff3f5] pr-[17px] pl-[2px] font-['Noto_Sans',sans-serif] text-[10px]">
        <Logo s={13} />
        <div className="ml-[4px] flex-1"><T w={62}>3D Slicer 5.6.1</T></div>
        <Svg w={9}><path d="M.5 4.500h8" stroke="#555" /></Svg>
        <Svg w={10} c="ml-[29px]"><rect x="1" y="3" width="6" height="6" rx="1.500" stroke="#333" strokeWidth="1.200" /><path d="M3.500 2.500Q3.500 1 5 1h2q2 0 2 2v2q0 1.500-1.500 1.500" stroke="#333" strokeWidth="1.100" /></Svg>
        <Svg w={9} c="ml-[31px]"><path d="M.5.500l8 8M8.500.500l-8 8" stroke="#333" strokeWidth="1.100" /></Svg>
      </div>
      <div className="flex h-[15px] items-center border-b-2 border-[#f4f4f4] bg-[#fefefe] pt-[2px] pl-[7px]">
        <div className="w-[23px]"><T w={13}><u>F</u>ile</T></div>
        <div className="w-[24px]"><T w={15}><u>E</u>dit</T></div>
        <div className="w-[29px]"><T w={19}><u>V</u>iew</T></div>
        <T w={17}><u>H</u>elp</T>
      </div>
      <Toolbar />
      <div className="flex h-[592px]">
        <LeftPanel />
        <View3D />
      </div>
      <div className="flex h-[25px] items-center justify-end border-b border-[#dcdcdc] bg-white">
        <div className="flex h-[21px] w-[22px] items-center justify-center border-l border-[#ddd]">
          <Svg w={17}><circle cx="8.500" cy="8.500" r="8" fill="#dd4a1a" stroke="#9e3a16" strokeWidth=".8" /><path d="M5.500 5.500l6 6M11.500 5.500l-6 6" stroke="#ffd9c8" strokeWidth="1.500" /></Svg>
        </div>
      </div>

      <div className="absolute top-[204px] left-[329px] w-[136px] border border-[#b5b5b5] bg-white shadow-[2px_2px_2px_rgba(0,0,0,.55)]">
        <div className="flex h-[15px] items-center pl-[21px] text-black"><T w={86}>Import/export nodes...</T></div>
        <div className="flex h-[16px] items-center bg-[#308cc6] pl-[21px] text-white"><T w={60}>Export to files...</T></div>
      </div>
      <ExportDialog />
      <svg className="pointer-events-none absolute inset-0" width="1280" height="720" fill="none" stroke="#fe0000" strokeWidth="3">
        <rect x="292.500" y="164.500" width="191" height="85.500" />
        <path d="M485 208L596 281" strokeWidth="2.500" />
        <path d="M609 288.500l-18.500-3 7.500-11z" fill="#fe0000" stroke="none" />
        <ellipse cx="826.500" cy="595" rx="187" ry="29.500" strokeWidth="2.600" />
      </svg>
    </div>
  );
}
